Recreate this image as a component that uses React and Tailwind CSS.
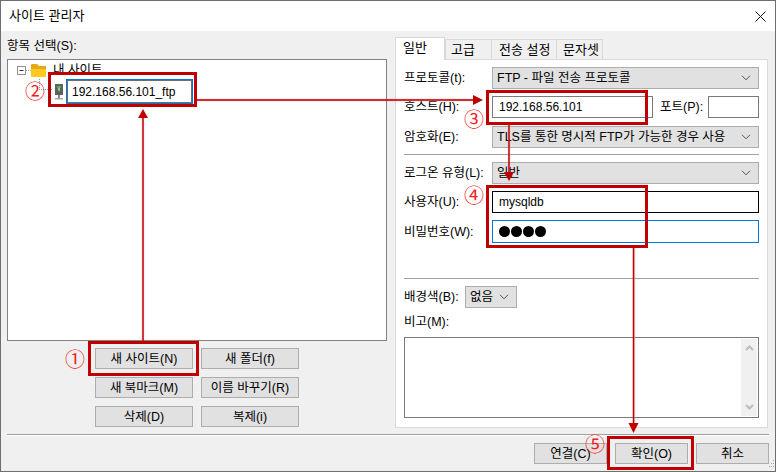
import React from "react";

const Chevron = () => (
  <svg width="10" height="6" viewBox="0 0 10 6" className="shrink-0" fill="none" stroke="#555" strokeWidth="1">
    <path d="M1 .8 5 4.8 9 .8" />
  </svg>
);

const Select = ({ children, className = "" }) => (
  <div className={`flex items-center justify-between bg-[#e1e1e1] border border-[#adadad] pl-[4px] pr-[7px] h-[22px] ${className}`}>
    <span className="whitespace-nowrap">{children}</span>
    <Chevron />
  </div>
);

const Label = ({ children, className = "" }) => (
  <span className={`whitespace-nowrap w-[88px] shrink-0 ${className}`}>{children}</span>
);

const Btn = ({ children, className = "w-[98px]" }) => (
  <button className={`h-[21px] ${className} bg-[#e1e1e1] border border-[#adadad] flex items-center justify-center whitespace-nowrap`}>
    {children}
  </button>
);

const Tab = ({ children, className = "" }) => (
  <div className={`h-[20px] bg-[#f0f0f0] border border-b-0 border-[#d9d9d9] -ml-px flex items-center whitespace-nowrap ${className}`}>
    {children}
  </div>
);

const RedBox = ({ className }) => (
  <div className={`absolute border-[3px] border-[#c00000] pointer-events-none ${className}`} />
);

const Num = ({ children, className }) => (
  <span className={`absolute text-[20px] leading-[20px] text-[#f02020] font-['Noto_Sans_CJK_KR',sans-serif] ${className}`}>{children}</span>
);

export default function App() {
  return (
    <div className="relative w-[776px] h-[472px] overflow-hidden border border-[#6e6e6e] bg-[#f0f0f0] text-[12.5px] leading-[16px] text-black font-['Liberation_Sans','Noto_Sans_CJK_KR',sans-serif]">
      {/* title bar */}
      <div className="h-[30px] bg-white flex items-center justify-between pl-[8px] pr-[9px]">
        <span className="text-[13px]">사이트 관리자</span>
        <svg width="11" height="11" viewBox="0 0 11 11" stroke="#111" strokeWidth="1" fill="none">
          <path d="M.5.5l10 10M10.5.5l-10 10" />
        </svg>
      </div>

      {/* main */}
      <div className="flex items-start h-[403px] pt-[6px] pl-[6px]">
        {/* left column */}
        <div className="w-[380px] shrink-0">
          <div className="h-[22px] pt-[1px]">항목 선택(S):</div>
          <div className="h-[282px] bg-white border border-[#828282] pt-[2px] pl-[9px]">
            <div className="flex items-center h-[16px]">
              <svg width="14" height="14" viewBox="0 0 14 14" className="shrink-0">
                <rect x=".5" y="3.5" width="8" height="8" fill="#fff" stroke="#919191" />
                <path d="M2.5 7.5h4" stroke="#333" />
                <path d="M9 7.5h5" stroke="#999" strokeDasharray="1 1" />
              </svg>
              <svg width="16" height="14" viewBox="0 0 16 14" className="shrink-0">
                <path d="M0 2a1 1 0 0 1 1-1h5l2 2h7v10H0z" fill="#e5a818" />
                <path d="M0 6h15v7a1 1 0 0 1-1 1H1a1 1 0 0 1-1-1z" fill="#ffc91f" />
              </svg>
              <span className="ml-[6px] whitespace-nowrap">내 사이트</span>
            </div>
            <div className="flex items-center h-[25px] mt-[1px]">
              <svg width="24" height="25" viewBox="0 0 24 25" className="shrink-0 ml-[13px]">
                <path d="M9.5 0v10M9 10.5h14" stroke="#999" strokeDasharray="1 1" />
              </svg>
              <svg width="10" height="16" viewBox="0 0 10 16" className="shrink-0">
                <rect x="1" y="0" width="8" height="11" fill="#5d6160" />
                <rect x="3" y="2" width="4" height="2" fill="#49b649" />
                <rect x="4" y="4" width="2" height="3" fill="#7fd07f" />
                <rect x="4" y="11" width="2" height="3" fill="#888" />
                <rect x="1" y="14" width="8" height="1.5" fill="#a9a9a9" />
              </svg>
              <div className="ml-[2px] w-[127px] h-[25px] border border-[#0078d7] bg-white">
                <div className="h-full border border-[#6e6e6e] pl-[4px] flex items-center whitespace-nowrap text-[12px]">
                  192.168.56.101_ftp
                </div>
              </div>
            </div>
          </div>
          <div className="grid grid-cols-[98px_98px] gap-x-[8px] gap-y-[8px] ml-[88px] mt-[7px]">
            <Btn>새 사이트(N)</Btn>
            <Btn>새 폴더(f)</Btn>
            <Btn>새 북마크(M)</Btn>
            <Btn>이름 바꾸기(R)</Btn>
            <Btn>삭제(D)</Btn>
            <Btn>복제(i)</Btn>
          </div>
        </div>

        {/* right column */}
        <div className="w-[373px] ml-[8px] shrink-0">
          <div className="flex items-end h-[22px]">
            <div className="relative z-10 w-[50px] h-[23px] -mb-px bg-white border border-b-0 border-[#d9d9d9] flex items-center pl-[7px] pb-[2px] text-[13px]">일반</div>
            <Tab className="w-[47px] ml-0 pl-[5px] text-[13px]">고급</Tab>
            <Tab className="w-[66px] pl-[7px] text-[13px]">전송 설정</Tab>
            <Tab className="w-[47px] pl-[6px] text-[13px]">문자셋</Tab>
          </div>
          <div className="h-[369px] bg-white border border-[#d9d9d9] pt-[7px] pl-[8px] pr-[8px]">
            <div className="flex items-center">
              <Label>프로토콜(t):</Label>
              <Select className="w-[267px]">FTP - 파일 전송 프로토콜</Select>
            </div>
            <div className="flex items-center mt-[7px]">
              <Label>호스트(H):</Label>
              <div className="w-[161px] h-[22px] border border-[#7a7a7a] pl-[6px] flex items-center text-[12px]">192.168.56.101</div>
              <span className="ml-[7px] w-[48px] whitespace-nowrap">포트(P):</span>
              <div className="w-[51px] h-[22px] border border-[#7a7a7a]" />
            </div>
            <div className="flex items-center mt-[8px]">
              <Label>암호화(E):</Label>
              <Select className="w-[267px]">TLS를 통한 명시적 FTP가 가능한 경우 사용</Select>
            </div>
            <div className="h-px bg-[#a0a0a0] mt-[6px]" />
            <div className="flex items-center mt-[7px]">
              <Label>로그온 유형(L):</Label>
              <Select className="w-[267px]">일반</Select>
            </div>
            <div className="flex items-center mt-[7px]">
              <Label>사용자(U):</Label>
              <div className="w-[267px] h-[22px] border border-black pl-[6px] flex items-center text-[12px]">mysqldb</div>
            </div>
            <div className="flex items-center mt-[7px]">
              <Label>비밀번호(W):</Label>
              <div className="w-[267px] h-[23px] border border-[#0078d7] pl-[6px] flex items-center gap-[1px]">
                <span className="w-[11px] h-[11px] rounded-full bg-black" />
                <span className="w-[11px] h-[11px] rounded-full bg-black" />
                <span className="w-[11px] h-[11px] rounded-full bg-black" />
                <span className="w-[11px] h-[11px] rounded-full bg-black" />
              </div>
            </div>
            <div className="h-px bg-[#a0a0a0] mt-[35px]" />
            <div className="flex items-center mt-[7px]">
              <span className="whitespace-nowrap w-[61px] shrink-0">배경색(B):</span>
              <Select className="w-[52px]">없음</Select>
            </div>
            <div className="mt-[6px] h-[23px]">비고(M):</div>
            <div className="w-[355px] h-[81px] border border-[#7a7a7a] flex justify-end p-px">
              <div className="w-[16px] h-full bg-[#f0f0f0] flex flex-col items-center justify-between py-[6px]">
                <svg width="9" height="6" viewBox="0 0 9 6" fill="none" stroke="#bcbcbc" strokeWidth="2"><path d="M1 5l3.5-3.5L8 5" /></svg>
                <svg width="9" height="6" viewBox="0 0 9 6" fill="none" stroke="#bcbcbc" strokeWidth="2"><path d="M1 1l3.5 3.5L8 1" /></svg>
              </div>
            </div>
          </div>
        </div>
      </div>

      {/* separator + footer */}
      <div className="ml-[6px] mr-[6px] h-[2px] bg-white border-t border-[#a0a0a0]" />
      <div className="flex justify-end gap-[8px] pr-[6px] mt-[7px]">
        <Btn className="w-[73px]">연결(C)</Btn>
        <Btn className="w-[73px]">확인(O)</Btn>
        <Btn className="w-[73px]">취소</Btn>
      </div>
      <svg width="6" height="9" viewBox="0 0 6 9" className="absolute right-0 bottom-[2px]" fill="#a8a8a8">
        <rect x="4" y="0" width="1" height="1" /><rect x="2" y="3" width="1" height="1" /><rect x="4" y="3" width="1" height="1" />
        <rect x="0" y="6" width="1" height="1" /><rect x="2" y="6" width="1" height="1" /><rect x="4" y="6" width="1" height="1" />
      </svg>

      {/* annotations */}
      <svg width="776" height="472" viewBox="0 0 776 472" className="absolute -left-px -top-px pointer-events-none">
        <g stroke="#e88" strokeWidth="2.4" fill="none" opacity=".55">
          <path d="M143 341V116M197 100H475M509 125V175M634 248V425" />
        </g>
        <g stroke="#c00000" strokeWidth="1.4" fill="none">
          <path d="M143 341V116M197 100H475M509 125V175M633.5 248V425" />
        </g>
        <g fill="#c00000">
          <path d="M143 109l5 9h-10z" />
          <path d="M483 100l-10-5v10z" />
          <path d="M509 181l-5-9h10z" />
          <path d="M633.5 433l-5-10h10z" />
        </g>
      </svg>
      <RedBox className="left-[47px] top-[71px] w-[149px] h-[35px]" />
      <RedBox className="left-[485px] top-[89px] w-[162px] h-[35px]" />
      <RedBox className="left-[485px] top-[184px] w-[162px] h-[63px]" />
      <RedBox className="left-[87px] top-[340px] w-[111px] h-[35px]" />
      <RedBox className="left-[606px] top-[435px] w-[87px] h-[34px]" />
      <Num className="left-[64px] top-[348px]">①</Num>
      <Num className="left-[24px] top-[80px]">②</Num>
      <Num className="left-[463px] top-[108px]">③</Num>
      <Num className="left-[463px] top-[184px]">④</Num>
      <Num className="left-[584px] top-[433px]">⑤</Num>
    </div>
  );
}
